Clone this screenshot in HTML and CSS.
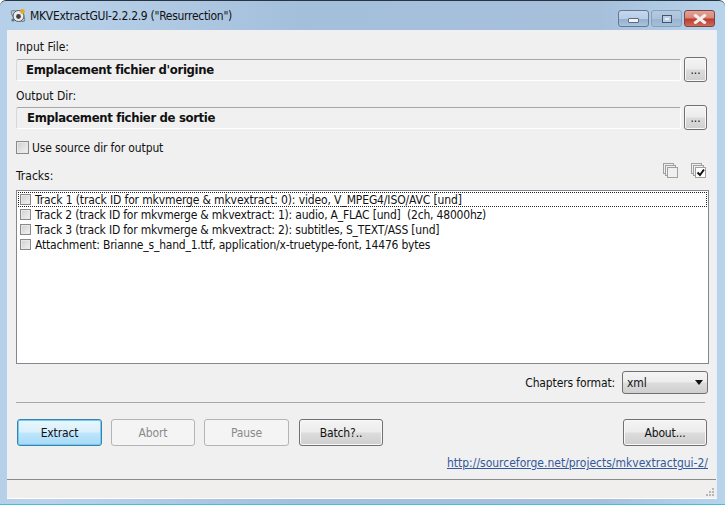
FILE: index.html
```html
<!DOCTYPE html>
<html lang="en">
<head>
<meta charset="utf-8">
<title>MKVExtractGUI</title>
<link rel="stylesheet" href="styles.css">
</head>
<body>
<div class="window">
  <header class="titlebar">
    <svg class="appicon" width="18" height="18" viewBox="0 0 18 18">
      <ellipse cx="9" cy="9" rx="8" ry="3.5" fill="none" stroke="#77808c" stroke-width="1" transform="rotate(35 9 9)"/>
      <circle cx="9.5" cy="9" r="5.5" fill="#e8ecf0" stroke="#555"/>
      <circle cx="9.5" cy="9.5" r="2.4" fill="#4a4038"/>
      <circle cx="13.5" cy="4.5" r="2.4" fill="#e8a820"/>
      <circle cx="4" cy="13" r="1.6" fill="#5a6e90"/>
    </svg>
    <span class="title">MKVExtractGUI-2.2.2.9 ("Resurrection")</span>
    <div class="caption">
      <div class="capbtn min"><span class="minglyph"></span></div>
      <div class="capbtn max"><span class="maxglyph"></span></div>
      <div class="capbtn close">
        <svg width="14" height="10" viewBox="0 0 14 10"><path d="M2.5 1.5 L11.5 8.5 M11.5 1.5 L2.5 8.5" stroke="#f4eeee" stroke-width="3" stroke-linecap="square" fill="none"/></svg>
      </div>
    </div>
  </header>
  <main class="client">
    <section class="content">
      <label class="label first">Input File:</label>
      <div class="pathrow">
        <div class="path">Emplacement fichier d'origine</div>
        <button class="btn dots">...</button>
      </div>
      <label class="label second">Output Dir:</label>
      <div class="pathrow">
        <div class="path alt">Emplacement fichier de sortie</div>
        <button class="btn dots">...</button>
      </div>
      <div class="checkrow"><span class="check"></span><span>Use source dir for output</span></div>
      <div class="tracksbar">
        <span class="tracklabel">Tracks:</span>
        <div class="selicons">
          <svg width="16" height="16" viewBox="0 0 16 16" fill="#f0f0f0" stroke="#a0a0a0">
            <rect x="0.5" y="0.5" width="10" height="10"/><rect x="2.5" y="2.5" width="10" height="10"/><rect x="4.5" y="4.5" width="10" height="10"/>
          </svg>
          <svg width="16" height="16" viewBox="0 0 16 16" fill="#f0f0f0" stroke="#a0a0a0">
            <rect x="0.5" y="0.5" width="10" height="10"/><rect x="2.5" y="2.5" width="10" height="10"/><rect x="4.5" y="4.5" width="10" height="10" fill="#fff"/>
            <path d="M6.5 9.5 L9 12 L13 6.5" fill="none" stroke="#111" stroke-width="2"/>
          </svg>
        </div>
      </div>
      <div class="list">
        <div class="row focus"><span class="check small"></span><span>Track 1 (track ID for mkvmerge &amp; mkvextract: 0): video, V_MPEG4/ISO/AVC [und]</span></div>
        <div class="row"><span class="check small"></span><span>Track 2 (track ID for mkvmerge &amp; mkvextract: 1): audio, A_FLAC [und]&nbsp; (2ch, 48000hz)</span></div>
        <div class="row"><span class="check small"></span><span>Track 3 (track ID for mkvmerge &amp; mkvextract: 2): subtitles, S_TEXT/ASS [und]</span></div>
        <div class="row"><span class="check small"></span><span>Attachment: Brianne_s_hand_1.ttf, application/x-truetype-font, 14476 bytes</span></div>
      </div>
      <div class="chapters">
        <span>Chapters format:</span>
        <div class="select"><span>xml</span><span class="arrow"></span></div>
      </div>
      <hr class="sep">
      <div class="actions">
        <button class="btn action primary">Extract</button>
        <button class="btn action" disabled>Abort</button>
        <button class="btn action wide" disabled>Pause</button>
        <button class="btn action">Batch?..</button>
        <button class="btn action about">About...</button>
      </div>
      <div class="linkrow"><a href="#">http://sourceforge.net/projects/mkvextractgui-2/</a></div>
    </section>
    <footer class="status">
      <svg class="grip" width="10" height="10" viewBox="0 0 10 10" fill="#b8b8b8">
        <rect x="7" y="1" width="2" height="2"/><rect x="4" y="4" width="2" height="2"/><rect x="7" y="4" width="2" height="2"/><rect x="1" y="7" width="2" height="2"/><rect x="4" y="7" width="2" height="2"/><rect x="7" y="7" width="2" height="2"/>
      </svg>
    </footer>
  </main>
</div>
</body>
</html>
```
FILE: styles.css
```css
* { box-sizing: border-box; }
html, body { margin: 0; height: 100%; }
body {
  width: 725px;
  height: 505px;
  overflow: hidden;
  font-family: "DejaVu Sans Condensed", "Open Sans", sans-serif;
  font-size: 12px;
  letter-spacing: -0.13px;
  color: #111;
  background: #fff;
}
.window {
  width: 725px;
  height: 505px;
  display: flex;
  flex-direction: column;
  border-top: 1px solid #2a3440;
  border-bottom: 1px solid #3fc0dc;
  border-radius: 6px 6px 0 0;
  background: linear-gradient(to right, #b5d0e8 0, #b9d2ea 50px, #a4bfdc 300px, #a6c0dc 600px, #b8d4ec 725px);
  padding: 0 8px 5px 7px;
}
.titlebar {
  height: 29px;
  flex: none;
  display: flex;
  align-items: center;
}
.appicon { margin: 0 3px 0 2px; flex: none; }
.title { color: #111; letter-spacing: -0.29px; }
.caption {
  margin-left: auto;
  display: flex;
  align-self: flex-start;
  margin-top: 9px;
  margin-right: 2px;
  gap: 2px;
}
.capbtn {
  width: 31px;
  height: 17px;
  border: 1px solid #66788e;
  border-radius: 3px;
  display: flex;
  align-items: center;
  justify-content: center;
  background: linear-gradient(#c4d8ee 0, #b8cee6 50%, #94aecb 52%, #a8c4de 100%);
}
.capbtn.max { border-color: #8aa0b8; background: linear-gradient(#b4cae2 0, #aac2dc 50%, #9ab4d0 52%, #a6c0da 100%); }
.capbtn.close {
  border-color: #7a4642;
  background: linear-gradient(#e2a39a 0, #d88678 48%, #bb3a2b 52%, #cf6a58 100%);
}
.minglyph { width: 11px; height: 5px; background: #f2f4f8; border: 1px solid #5a6a80; margin-top: 4px; border-radius: 1px; }
.maxglyph { width: 10px; height: 8px; border: 1px solid #44566c; background: #bccee2; }
.maxglyph::after { content: ""; display: block; width: 4px; height: 2px; margin: 2px; background: #e6edf4; }
.client {
  flex: 1;
  min-height: 0;
  display: flex;
  flex-direction: column;
  background: #f0f0f0;
  border-bottom: 1px solid #fff;
  border-right: 1px solid #e8eef4;
}
.content {
  flex: 1;
  padding: 0 9px;
  display: flex;
  flex-direction: column;
}
.label { display: block; height: 14px; line-height: 14px; letter-spacing: 0; }
.label.first { margin-top: 10px; margin-bottom: 3px; }
.label.second { margin-top: 8px; margin-bottom: 4px; overflow: hidden; height: 11px; line-height: 13px; }
.pathrow { display: flex; align-items: center; height: 25px; }
.path {
  width: 665px;
  height: 22px;
  padding-left: 9px;
  line-height: 20px;
  font-size: 13px;
  font-weight: 700;
  letter-spacing: -0.35px;
  border: 1px solid #fff;
  border-top-color: #a6a6a6;
  border-left-color: #d8d8d8;
  background: #f0f0f0;
  border-radius: 2px;
}
.path.alt { padding-left: 10px; }
.btn {
  font: inherit;
  letter-spacing: -0.13px;
  color: #111;
  padding: 0;
  border: 1px solid #707070;
  border-radius: 3px;
  background: linear-gradient(#f4f4f4 0, #ececec 48%, #dcdcdc 52%, #cfcfcf 100%);
  box-shadow: inset 0 0 0 1px #f8f8f8;
}
.btn.dots { width: 23px; height: 25px; margin-left: 3px; line-height: 22px; }
.btn:disabled {
  color: #8a8a8a;
  border-color: #b4b4b4;
  background: #f4f4f4;
  box-shadow: none;
}
.checkrow { display: flex; align-items: center; gap: 3px; margin-top: 10px; height: 15px; }
.check {
  width: 13px;
  height: 13px;
  flex: none;
  border: 1px solid #8a8a8a;
  background: linear-gradient(135deg, #cfcfcf, #f2f2f2);
  box-shadow: inset 0 0 0 1px #e8e8e8;
}
.tracksbar {
  display: flex;
  justify-content: space-between;
  align-items: flex-start;
  margin-top: 8px;
  height: 27px;
}
.tracklabel { margin-top: 6px; letter-spacing: 0; }
.selicons { display: flex; gap: 12px; margin-right: 0; }
.list {
  width: 693px;
  height: 174px;
  border: 1px solid #828790;
  background: #fff;
  padding: 1px;
}
.row { display: flex; align-items: center; height: 15px; padding-left: 2px; gap: 3px; white-space: nowrap; letter-spacing: -0.2px; }
.row.focus { outline: 1px dotted #222; outline-offset: -1px; letter-spacing: -0.13px; }
.check.small { width: 11px; height: 11px; margin-right: 1px; }
.chapters {
  display: flex;
  justify-content: flex-end;
  align-items: center;
  gap: 7px;
  margin: 7px -1px 0 0;
  height: 23px;
}
.select {
  width: 86px;
  height: 23px;
  display: flex;
  align-items: center;
  justify-content: space-between;
  padding: 0 4px 0 4px;
  border: 1px solid #707070;
  border-radius: 3px;
  background: linear-gradient(#f4f4f4 0, #ececec 48%, #dcdcdc 52%, #cfcfcf 100%);
}
.arrow { width: 0; height: 0; border: 4px solid transparent; border-top: 5px solid #111; border-bottom: 0; }
.sep { width: 689px; height: 1px; margin: 8px 0 0; border: 0; background: #a8a8a8; }
.actions { display: flex; margin-top: 16px; padding-left: 1px; gap: 9px; }
.btn.action { width: 84px; height: 27px; }
.btn.primary { width: 85px; }
.btn.primary {
  border: 1px solid #3c7fb1;
  background: linear-gradient(#eaf6fd 0, #d9f0fc 48%, #bee6fd 52%, #a7d9f5 100%);
  box-shadow: inset 0 0 0 1px #6fd0ee;
}
.btn.action.wide { width: 85px; margin-right: 1px; }
.btn.action.about { margin-left: auto; }
.linkrow { display: flex; justify-content: flex-end; margin: 10px -1px 0 0; height: 15px; line-height: 15px; }
.linkrow a { color: #33589c; text-decoration: underline; letter-spacing: 0; }
.status {
  height: 19px;
  flex: none;
  border-top: 1px solid #8c8c8c;
  background: #f1eeee;
  display: flex;
  justify-content: flex-end;
  align-items: flex-end;
}
.grip { margin: 0 1px 1px 0; }
```
